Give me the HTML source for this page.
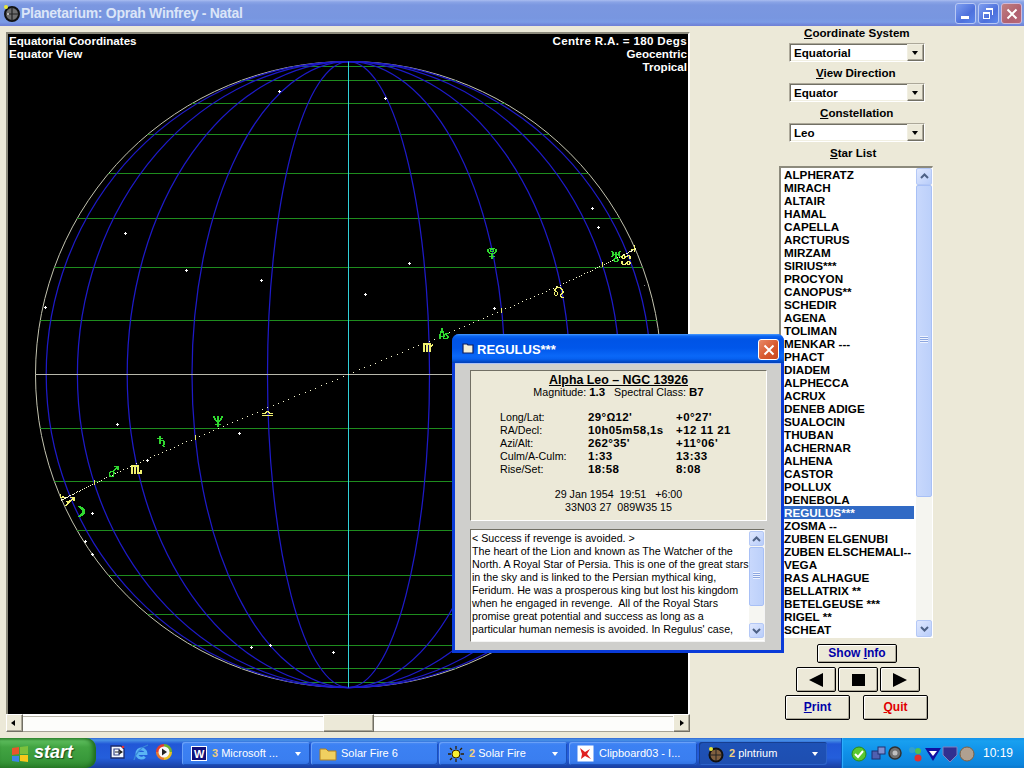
<!DOCTYPE html>
<html><head><meta charset="utf-8"><title>Planetarium</title>
<style>
*{margin:0;padding:0;box-sizing:border-box}
html,body{width:1024px;height:768px;overflow:hidden;background:#ece9d8;font-family:"Liberation Sans",sans-serif}
.a{position:absolute}
#title{left:0;top:0;width:1024px;height:26px;background:linear-gradient(to bottom,#a9bdf0 0px,#8aa4e6 2px,#7b97e0 5px,#7896e0 18px,#7a9be6 22px,#6f84d8 25px,#6f80d6 26px)}
#title .t{left:21px;top:4.5px;letter-spacing:-0.3px;font:bold 14px "Liberation Sans",sans-serif;color:#dbe5f8;white-space:nowrap}
.tb{top:3px;width:21px;height:21px;border:1px solid #b8c8f4;border-radius:3px;background:linear-gradient(135deg,#7e9ef0,#4d70dc 60%,#5b86ec)}
.tbx{background:linear-gradient(135deg,#c08080,#b06070 60%,#b86878);border-color:#d0b8d8}
.txt{white-space:nowrap}
#panel{left:6px;top:32px;width:684px;height:682px;border-top:2px solid #8c8a7c;border-left:2px solid #8c8a7c;border-right:2px solid #fff;background:#000}
.lbl{font:bold 11.6px "Liberation Sans",sans-serif;color:#000;white-space:nowrap}
.wt{font:bold 11.6px "Liberation Sans",sans-serif;color:#fff;white-space:nowrap;line-height:13px}
.combo{left:789px;width:136px;height:19px;background:#fff;border-top:1px solid #aca899;border-left:1px solid #aca899;border-right:1px solid #fff;border-bottom:1px solid #fff;box-shadow:inset 1px 1px 0 #716f64,inset -1px -1px 0 #f1efe2}
.combo .v{left:4px;top:2px;font:bold 11.6px "Liberation Sans",sans-serif}
.combo .dd{right:0px;top:0px;width:17px;height:17px;background:#ece9d8;border-top:1px solid #f1efe2;border-left:1px solid #f1efe2;border-right:1px solid #716f64;border-bottom:1px solid #716f64;box-shadow:inset -1px -1px 0 #aca899}
.dd:after{content:"";position:absolute;left:4px;top:6px;border-left:3.5px solid transparent;border-right:3.5px solid transparent;border-top:4px solid #000}
#list{left:779px;top:166px;width:154px;height:472px;background:#fff;border-top:2px solid #8c8a7c;border-left:2px solid #8c8a7c;border-right:1px solid #fff;border-bottom:1px solid #fff}
.li{height:13px;line-height:13px;font:bold 11.7px/13px "Liberation Sans",sans-serif;padding-left:3px;white-space:nowrap;width:133px;color:#000}
.sel{background:#316ac5;color:#fff}
.sb{background:#ece9d8;border-top:1px solid #fff;border-left:1px solid #fff;border-right:1px solid #716f64;border-bottom:1px solid #716f64;box-shadow:inset -1px -1px 0 #aca899}
.btn{background:#ece9d8;border:1px solid #000;border-radius:2px;box-shadow:inset 1px 1px 0 #fff,inset -1px -1px 0 #aca899;text-align:center;font:bold 12px "Liberation Sans",sans-serif}
#dlg{left:452px;top:334px;width:332px;height:319px;background:#0a3bd8;border-radius:7px 7px 0 0}
#dlgt{left:0;top:0;width:332px;height:29px;border-radius:7px 7px 0 0;background:linear-gradient(to bottom,#4a9cff 0px,#0c66f2 2px,#0054e6 5px,#0056ea 14px,#0a68f8 22px,#0660f0 25px,#0044c0 28px,#0040b8 29px)}
#dlgb{left:3px;top:29px;width:326px;height:287px;background:#cfcfcc;border-top:1px solid #a8c0f8}
.sunk{border-top:1px solid #716f64;border-left:1px solid #716f64;border-right:1px solid #fff;border-bottom:1px solid #fff}
.r11{font:10.7px "Liberation Sans",sans-serif;color:#000;white-space:nowrap}
.b11{font:bold 11.5px "Liberation Sans",sans-serif;color:#000;white-space:nowrap}
#task{left:0;top:738px;width:1024px;height:30px;background:linear-gradient(to bottom,#3168d5 0px,#4993e6 2px,#2157d7 6px,#245edb 20px,#1941a5 29px,#1a3ea0 30px)}
.tk{top:4px;height:23px;border-radius:3px;background:linear-gradient(to bottom,#4c8cf5 0,#3c81f3 3px,#3a7ef0 18px,#3070e0 23px);box-shadow:inset 1px 1px 0 #69a0f8, inset -1px -1px 0 #1c4fb8;color:#fff;font:11px "Liberation Sans",sans-serif;white-space:nowrap}
.tka{background:linear-gradient(to bottom,#1e52b7 0,#1e4eb0 23px);box-shadow:inset 1px 1px 0 #173f90, inset -1px -1px 0 #2d62c8}
.tk .tx{position:absolute;top:5px}
.tk .ar{position:absolute;right:9px;top:10px;border-left:3.5px solid transparent;border-right:3.5px solid transparent;border-top:4px solid #fff}
</style></head><body>
<div class="a" id="title">
  <svg class="a" style="left:3px;top:4px" width="18" height="18" viewBox="0 0 18 18"><circle cx="9" cy="10" r="7" fill="#6e6e6e" stroke="#111" stroke-width="2"/><path d="M9 3v14M2 10h14" stroke="#222" stroke-width="1.2"/><circle cx="5" cy="10" r="1" fill="#ddd"/><circle cx="3" cy="3" r="2" fill="#e8e838"/></svg>
  <div class="a t">Planetarium: Oprah Winfrey - Natal</div>
  <div class="a tb" style="left:955px"><div class="a" style="left:5px;top:12px;width:8px;height:3px;background:#fff"></div></div>
  <div class="a tb" style="left:978px"><div class="a" style="left:4px;top:8px;width:7px;height:7px;border:1px solid #fff;border-top-width:2px"></div><div class="a" style="left:7px;top:4px;width:7px;height:7px;border-top:2px solid #fff;border-right:1px solid #fff"></div></div>
  <div class="a tb tbx" style="left:1001px"><svg class="a" style="left:4px;top:4px" width="12" height="12"><path d="M1.5 1.5L10.5 10.5M10.5 1.5L1.5 10.5" stroke="#fff" stroke-width="2"/></svg></div>
</div>

<div class="a" id="panel"></div>
<svg width="1024" height="768" style="position:absolute;left:0;top:0">
<defs><clipPath id="cc"><rect x="8" y="34" width="680" height="680"/></clipPath></defs>
<g clip-path="url(#cc)">
<circle cx="348.5" cy="374.5" r="313" fill="none" stroke="#c4c4b0" stroke-width="1"/>
<line x1="292.8" y1="682.5" x2="404.2" y2="682.5" stroke="#1e8c1e" stroke-width="1"/>
<line x1="241.1" y1="668.5" x2="455.9" y2="668.5" stroke="#1e8c1e" stroke-width="1"/>
<line x1="191.9" y1="645.5" x2="505.1" y2="645.5" stroke="#1e8c1e" stroke-width="1"/>
<line x1="147.6" y1="614.5" x2="549.4" y2="614.5" stroke="#1e8c1e" stroke-width="1"/>
<line x1="108.6" y1="575.5" x2="588.4" y2="575.5" stroke="#1e8c1e" stroke-width="1"/>
<line x1="77.1" y1="530.5" x2="619.9" y2="530.5" stroke="#1e8c1e" stroke-width="1"/>
<line x1="54.4" y1="481.5" x2="642.6" y2="481.5" stroke="#1e8c1e" stroke-width="1"/>
<line x1="40.2" y1="428.5" x2="656.8" y2="428.5" stroke="#1e8c1e" stroke-width="1"/>
<line x1="40.2" y1="320.5" x2="656.8" y2="320.5" stroke="#1e8c1e" stroke-width="1"/>
<line x1="54.4" y1="267.5" x2="642.6" y2="267.5" stroke="#1e8c1e" stroke-width="1"/>
<line x1="77.1" y1="218.5" x2="619.9" y2="218.5" stroke="#1e8c1e" stroke-width="1"/>
<line x1="108.6" y1="173.5" x2="588.4" y2="173.5" stroke="#1e8c1e" stroke-width="1"/>
<line x1="147.6" y1="134.5" x2="549.4" y2="134.5" stroke="#1e8c1e" stroke-width="1"/>
<line x1="191.9" y1="103.5" x2="505.1" y2="103.5" stroke="#1e8c1e" stroke-width="1"/>
<line x1="241.1" y1="80.5" x2="455.9" y2="80.5" stroke="#1e8c1e" stroke-width="1"/>
<line x1="292.8" y1="66.5" x2="404.2" y2="66.5" stroke="#1e8c1e" stroke-width="1"/>
<ellipse cx="348.5" cy="374.5" rx="81.0" ry="313" fill="none" stroke="#1e1ac8" stroke-width="1.25"/>
<ellipse cx="348.5" cy="374.5" rx="156.5" ry="313" fill="none" stroke="#1e1ac8" stroke-width="1.25"/>
<ellipse cx="348.5" cy="374.5" rx="221.3" ry="313" fill="none" stroke="#1e1ac8" stroke-width="1.25"/>
<ellipse cx="348.5" cy="374.5" rx="271.1" ry="313" fill="none" stroke="#1e1ac8" stroke-width="1.25"/>
<ellipse cx="348.5" cy="374.5" rx="302.3" ry="313" fill="none" stroke="#1e1ac8" stroke-width="1.25"/>
<line x1="35.5" y1="374.5" x2="661.5" y2="374.5" stroke="#b8b8ac" stroke-width="1"/>
<line x1="348.5" y1="61.5" x2="348.5" y2="687.5" stroke="#30d0d8" stroke-width="1"/>
<path d="M61 500h1v1h-1zM61 500h1v1h-1zM61 500h1v1h-1zM61 499h1v1h-1zM62 499h1v1h-1zM62 499h1v1h-1zM63 499h1v1h-1zM63 499h1v1h-1zM64 498h1v1h-1zM65 498h1v1h-1zM65 497h1v1h-1zM66 497h1v1h-1zM67 497h1v1h-1zM68 496h1v1h-1zM69 495h1v1h-1zM70 495h1v1h-1zM72 494h1v1h-1zM73 494h1v1h-1zM74 493h1v1h-1zM76 492h1v1h-1zM77 491h1v1h-1zM79 491h1v1h-1zM80 490h1v1h-1zM82 489h1v1h-1zM84 488h1v1h-1zM86 487h1v1h-1zM88 486h1v1h-1zM90 485h1v1h-1zM92 484h1v1h-1zM94 483h1v1h-1zM97 482h1v1h-1zM99 481h1v1h-1zM101 480h1v1h-1zM104 478h1v1h-1zM106 477h1v1h-1zM109 476h1v1h-1zM112 475h1v1h-1zM115 473h1v1h-1zM117 472h1v1h-1zM120 471h1v1h-1zM123 469h1v1h-1zM127 468h1v1h-1zM130 466h1v1h-1zM133 465h1v1h-1zM136 463h1v1h-1zM140 462h1v1h-1zM143 460h1v1h-1zM147 459h1v1h-1zM150 457h1v1h-1zM154 455h1v1h-1zM158 454h1v1h-1zM162 452h1v1h-1zM166 450h1v1h-1zM170 449h1v1h-1zM174 447h1v1h-1zM178 445h1v1h-1zM182 443h1v1h-1zM186 441h1v1h-1zM191 440h1v1h-1zM195 438h1v1h-1zM199 436h1v1h-1zM204 434h1v1h-1zM209 432h1v1h-1zM213 430h1v1h-1zM218 428h1v1h-1zM223 426h1v1h-1zM227 424h1v1h-1zM232 422h1v1h-1zM237 420h1v1h-1zM242 418h1v1h-1zM247 416h1v1h-1zM252 414h1v1h-1zM257 412h1v1h-1zM262 409h1v1h-1zM267 407h1v1h-1zM273 405h1v1h-1zM278 403h1v1h-1zM283 401h1v1h-1zM288 399h1v1h-1zM294 396h1v1h-1zM299 394h1v1h-1zM305 392h1v1h-1zM310 390h1v1h-1zM315 388h1v1h-1zM321 385h1v1h-1zM326 383h1v1h-1zM332 381h1v1h-1zM337 379h1v1h-1zM343 376h1v1h-1zM348 374h1v1h-1zM353 372h1v1h-1zM359 369h1v1h-1zM364 367h1v1h-1zM370 365h1v1h-1zM375 363h1v1h-1zM381 360h1v1h-1zM386 358h1v1h-1zM391 356h1v1h-1zM397 354h1v1h-1zM402 352h1v1h-1zM408 349h1v1h-1zM413 347h1v1h-1zM418 345h1v1h-1zM423 343h1v1h-1zM429 341h1v1h-1zM434 339h1v1h-1zM439 336h1v1h-1zM444 334h1v1h-1zM449 332h1v1h-1zM454 330h1v1h-1zM459 328h1v1h-1zM464 326h1v1h-1zM469 324h1v1h-1zM473 322h1v1h-1zM478 320h1v1h-1zM483 318h1v1h-1zM487 316h1v1h-1zM492 314h1v1h-1zM497 312h1v1h-1zM501 310h1v1h-1zM505 308h1v1h-1zM510 307h1v1h-1zM514 305h1v1h-1zM518 303h1v1h-1zM522 301h1v1h-1zM526 299h1v1h-1zM530 298h1v1h-1zM534 296h1v1h-1zM538 294h1v1h-1zM542 293h1v1h-1zM546 291h1v1h-1zM549 289h1v1h-1zM553 288h1v1h-1zM556 286h1v1h-1zM560 285h1v1h-1zM563 283h1v1h-1zM566 282h1v1h-1zM569 280h1v1h-1zM573 279h1v1h-1zM576 277h1v1h-1zM579 276h1v1h-1zM581 275h1v1h-1zM584 273h1v1h-1zM587 272h1v1h-1zM590 271h1v1h-1zM592 270h1v1h-1zM595 268h1v1h-1zM597 267h1v1h-1zM599 266h1v1h-1zM602 265h1v1h-1zM604 264h1v1h-1zM606 263h1v1h-1zM608 262h1v1h-1zM610 261h1v1h-1zM612 260h1v1h-1zM614 259h1v1h-1zM616 258h1v1h-1zM617 257h1v1h-1zM619 257h1v1h-1zM620 256h1v1h-1zM622 255h1v1h-1zM623 254h1v1h-1zM624 254h1v1h-1zM626 253h1v1h-1zM627 253h1v1h-1zM628 252h1v1h-1zM629 251h1v1h-1zM630 251h1v1h-1zM631 251h1v1h-1zM631 250h1v1h-1zM632 250h1v1h-1zM633 249h1v1h-1zM633 249h1v1h-1zM634 249h1v1h-1zM634 249h1v1h-1zM635 249h1v1h-1zM635 248h1v1h-1zM635 248h1v1h-1zM635 248h1v1h-1z" fill="#f8f8d0"/>
<rect x="94" y="480" width="1" height="5" fill="#e8e860"/>
<rect x="195" y="435" width="1" height="5" fill="#e8e860"/>
<rect x="501" y="308" width="1" height="5" fill="#e8e860"/>
<rect x="602" y="262" width="1" height="5" fill="#e8e860"/>
<path d="M60 494h1v4h-1zM61 497h4v1h-4zM62 496h2v1h-2z" fill="#f0f070"/>
<path d="M634 245h1v7h-1zM631 249h3v1h-3z" fill="#f0f070"/>
<path d="M278 91h3v1h-3zM279 90h1v3h-1z" fill="#fff"/>
<path d="M384 98h3v1h-3zM385 97h1v3h-1z" fill="#fff"/>
<path d="M124 233h3v1h-3zM125 232h1v3h-1z" fill="#fff"/>
<path d="M185 270h3v1h-3zM186 269h1v3h-1z" fill="#fff"/>
<path d="M260 280h3v1h-3zM261 279h1v3h-1z" fill="#fff"/>
<path d="M408 263h3v1h-3zM409 262h1v3h-1z" fill="#fff"/>
<path d="M591 208h3v1h-3zM592 207h1v3h-1z" fill="#fff"/>
<path d="M597 227h3v1h-3zM598 226h1v3h-1z" fill="#fff"/>
<path d="M364 294h3v1h-3zM365 293h1v3h-1z" fill="#fff"/>
<path d="M493 308h3v1h-3zM494 307h1v3h-1z" fill="#fff"/>
<path d="M44 307h3v1h-3zM45 306h1v3h-1z" fill="#fff"/>
<path d="M116 424h3v1h-3zM117 423h1v3h-1z" fill="#fff"/>
<path d="M238 433h3v1h-3zM239 432h1v3h-1z" fill="#fff"/>
<path d="M146 460h3v1h-3zM147 459h1v3h-1z" fill="#fff"/>
<path d="M91 513h3v1h-3zM92 512h1v3h-1z" fill="#fff"/>
<path d="M84 541h3v1h-3zM85 540h1v3h-1z" fill="#fff"/>
<path d="M91 554h3v1h-3zM92 553h1v3h-1z" fill="#fff"/>
<path d="M250 647h3v1h-3zM251 646h1v3h-1z" fill="#fff"/>
<path d="M269 645h3v1h-3zM270 644h1v3h-1z" fill="#fff"/>
<path d="M332 652h3v1h-3zM333 651h1v3h-1z" fill="#fff"/>
<rect x="644" y="285" width="1" height="1" fill="#888"/>
<path d="M213 416h2v1h-2zM217 416h2v1h-2zM221 416h2v1h-2zM213 417h2v1h-2zM217 417h2v1h-2zM221 417h2v1h-2zM214 418h2v1h-2zM217 418h2v1h-2zM220 418h2v1h-2zM214 419h2v1h-2zM217 419h2v1h-2zM220 419h2v1h-2zM215 420h6v1h-6zM216 421h4v1h-4zM217 422h2v1h-2zM217 423h2v1h-2zM215 424h6v1h-6zM217 425h2v1h-2zM217 426h2v1h-2z" fill="#30d830"/><path d="M266 411h3v1h-3zM265 412h2v1h-2zM268 412h2v1h-2zM262 413h4v1h-4zM269 413h4v1h-4zM262 415h11v1h-11z" fill="#f0f070"/><path d="M159 436h2v1h-2zM159 437h2v1h-2zM157 438h6v1h-6zM159 439h2v1h-2zM159 440h5v1h-5zM159 441h2v1h-2zM163 441h2v1h-2zM159 442h2v1h-2zM163 442h2v1h-2zM159 443h2v1h-2zM163 443h2v1h-2zM163 444h2v1h-2zM162 445h2v1h-2zM163 446h2v1h-2z" fill="#30d830"/><path d="M114 466h5v1h-5zM116 467h3v1h-3zM115 468h4v1h-4zM114 469h2v1h-2zM117 469h2v1h-2zM113 470h2v1h-2zM110 471h4v1h-4zM109 472h2v1h-2zM113 472h2v1h-2zM109 473h1v1h-1zM113 473h2v1h-2zM109 474h1v1h-1zM113 474h1v1h-1zM109 475h2v1h-2zM113 475h1v1h-1zM109 476h5v1h-5z" fill="#30d830"/><path d="M131 465h8v1h-8zM131 466h8v1h-8zM131 467h2v1h-2zM134 467h2v1h-2zM137 467h2v1h-2zM131 468h2v1h-2zM134 468h2v1h-2zM137 468h2v1h-2zM131 469h2v1h-2zM134 469h2v1h-2zM137 469h2v1h-2zM131 470h2v1h-2zM134 470h2v1h-2zM137 470h2v1h-2zM140 470h2v1h-2zM131 471h2v1h-2zM134 471h2v1h-2zM137 471h2v1h-2zM140 471h2v1h-2zM131 472h2v1h-2zM134 472h2v1h-2zM137 472h5v1h-5zM131 473h2v1h-2zM134 473h2v1h-2zM137 473h5v1h-5z" fill="#f0f070"/><path d="M70 497h5v1h-5zM72 498h3v1h-3zM71 499h4v1h-4zM69 500h3v1h-3zM73 500h2v1h-2zM66 501h5v1h-5zM67 502h3v1h-3zM67 503h2v1h-2zM66 504h2v1h-2zM65 505h2v1h-2z" fill="#f0f070"/><path d="M78 506h3v1h-3zM79 507h4v1h-4zM80 508h4v1h-4zM81 509h4v1h-4zM82 510h3v1h-3zM82 511h3v1h-3zM82 512h3v1h-3zM81 513h4v1h-4zM80 514h4v1h-4zM79 515h4v1h-4zM78 516h3v1h-3z" fill="#30d830"/><path d="M423 343h8v1h-8zM423 344h8v1h-8zM432 344h1v1h-1zM423 345h2v1h-2zM426 345h2v1h-2zM429 345h4v1h-4zM423 346h2v1h-2zM426 346h2v1h-2zM429 346h3v1h-3zM423 347h2v1h-2zM426 347h2v1h-2zM429 347h2v1h-2zM423 348h2v1h-2zM426 348h2v1h-2zM429 348h2v1h-2zM423 349h2v1h-2zM426 349h2v1h-2zM429 349h2v1h-2zM423 350h2v1h-2zM426 350h2v1h-2zM429 350h2v1h-2zM423 351h2v1h-2zM426 351h2v1h-2zM429 351h2v1h-2z" fill="#f0f070"/><path d="M441 328h2v1h-2zM441 329h2v1h-2zM441 330h2v1h-2zM440 331h4v1h-4zM440 332h4v1h-4zM440 333h1v1h-1zM443 333h1v1h-1zM445 333h4v1h-4zM439 334h2v1h-2zM443 334h4v1h-4zM439 335h2v1h-2zM443 335h2v1h-2zM446 335h2v1h-2zM439 336h6v1h-6zM447 336h2v1h-2zM439 337h2v1h-2zM443 337h1v1h-1zM447 337h2v1h-2zM439 338h2v1h-2zM443 338h5v1h-5z" fill="#30d830"/><path d="M557 286h1v1h-1zM556 287h5v1h-5zM555 288h2v1h-2zM560 288h2v1h-2zM554 289h2v1h-2zM561 289h2v1h-2zM554 290h2v1h-2zM562 290h1v1h-1zM555 291h2v1h-2zM562 291h2v1h-2zM554 292h1v1h-1zM557 292h1v1h-1zM562 292h2v1h-2zM554 293h1v1h-1zM557 293h1v1h-1zM561 293h2v1h-2zM554 294h1v1h-1zM557 294h1v1h-1zM560 294h2v1h-2zM555 295h2v1h-2zM560 295h1v1h-1zM560 296h2v1h-2zM561 297h3v1h-3z" fill="#f0f070"/><path d="M489 248h6v1h-6zM487 249h2v1h-2zM490 249h4v1h-4zM495 249h2v1h-2zM487 250h2v1h-2zM490 250h1v1h-1zM493 250h1v1h-1zM495 250h2v1h-2zM487 251h2v1h-2zM490 251h4v1h-4zM495 251h2v1h-2zM488 252h2v1h-2zM494 252h2v1h-2zM489 253h6v1h-6zM491 254h2v1h-2zM491 255h2v1h-2zM489 256h6v1h-6zM491 257h2v1h-2zM491 258h2v1h-2z" fill="#30d830"/><path d="M611 251h2v1h-2zM619 251h2v1h-2zM612 252h2v1h-2zM615 252h2v1h-2zM618 252h2v1h-2zM612 253h2v1h-2zM615 253h2v1h-2zM618 253h2v1h-2zM612 254h8v1h-8zM612 255h2v1h-2zM615 255h2v1h-2zM618 255h2v1h-2zM611 256h2v1h-2zM615 256h2v1h-2zM619 256h2v1h-2zM615 257h2v1h-2zM614 258h4v1h-4zM613 259h2v1h-2zM617 259h2v1h-2zM613 260h2v1h-2zM617 260h2v1h-2zM614 261h4v1h-4z" fill="#30d830"/><path d="M622 255h3v1h-3zM627 255h3v1h-3zM621 256h2v1h-2zM624 256h4v1h-4zM629 256h2v1h-2zM621 257h2v1h-2zM624 257h2v1h-2zM629 257h2v1h-2zM622 258h3v1h-3zM629 258h2v1h-2zM621 261h2v1h-2zM627 261h3v1h-3zM621 262h2v1h-2zM626 262h2v1h-2zM629 262h2v1h-2zM621 263h2v1h-2zM625 263h3v1h-3zM629 263h2v1h-2zM622 264h4v1h-4zM627 264h3v1h-3z" fill="#f0f070"/></g>
</svg>
<div class="a wt" style="left:9px;top:34px">Equatorial Coordinates<br>Equator View</div>
<div class="a wt" style="right:337px;top:34px;text-align:right"><span style="letter-spacing:0.33px">Centre R.A. = 180 Degs</span><br>Geocentric<br>Tropical</div>

<!-- horizontal scrollbar -->
<div class="a" style="left:6px;top:714px;width:684px;height:18px;background:#fdfdfb;border-top:2px solid #fff;border-bottom:1px solid #a5a296"><div class="a" style="left:0;top:0;width:684px;height:1px;background:#b8b6a8"></div></div>
<div class="a sb" style="left:6px;top:714px;width:17px;height:18px"><div class="a" style="left:4px;top:5px;border-top:3.5px solid transparent;border-bottom:3.5px solid transparent;border-right:4px solid #000"></div></div>
<div class="a sb" style="left:323px;top:714px;width:51px;height:18px"></div>
<div class="a sb" style="left:673px;top:714px;width:17px;height:18px"><div class="a" style="left:6px;top:5px;border-top:3.5px solid transparent;border-bottom:3.5px solid transparent;border-left:4px solid #000"></div></div>

<!-- right panel -->
<div class="a lbl" style="left:804px;top:26px"><u>C</u>oordinate System</div>
<div class="a combo" style="top:43px"><div class="a v">Equatorial</div><div class="a dd"></div></div>
<div class="a lbl" style="left:816px;top:66px"><u>V</u>iew Direction</div>
<div class="a combo" style="top:83px"><div class="a v">Equator</div><div class="a dd"></div></div>
<div class="a lbl" style="left:820px;top:106px"><u>C</u>onstellation</div>
<div class="a combo" style="top:123px"><div class="a v">Leo</div><div class="a dd"></div></div>
<div class="a lbl" style="left:830px;top:146px"><u>S</u>tar List</div>
<div class="a" id="list"><div class="li">ALPHERATZ</div><div class="li">MIRACH</div><div class="li">ALTAIR</div><div class="li">HAMAL</div><div class="li">CAPELLA</div><div class="li">ARCTURUS</div><div class="li">MIRZAM</div><div class="li">SIRIUS***</div><div class="li">PROCYON</div><div class="li">CANOPUS**</div><div class="li">SCHEDIR</div><div class="li">AGENA</div><div class="li">TOLIMAN</div><div class="li">MENKAR ---</div><div class="li">PHACT</div><div class="li">DIADEM</div><div class="li">ALPHECCA</div><div class="li">ACRUX</div><div class="li">DENEB ADIGE</div><div class="li">SUALOCIN</div><div class="li">THUBAN</div><div class="li">ACHERNAR</div><div class="li">ALHENA</div><div class="li">CASTOR</div><div class="li">POLLUX</div><div class="li">DENEBOLA</div><div class="li sel">REGULUS***</div><div class="li">ZOSMA --</div><div class="li">ZUBEN ELGENUBI</div><div class="li">ZUBEN ELSCHEMALI--</div><div class="li">VEGA</div><div class="li">RAS ALHAGUE</div><div class="li">BELLATRIX **</div><div class="li">BETELGEUSE ***</div><div class="li">RIGEL **</div><div class="li">SCHEAT</div>
  <div class="a" style="left:135px;top:0;width:16px;height:469px;background:#f5f5f0"></div>
  <div class="a" style="left:135px;top:0px;width:16px;height:17px;border:1px solid #b4c8f6;border-radius:2px;background:linear-gradient(135deg,#e0e8fe,#b8cdfa)"><svg class="a" style="left:3px;top:4px" width="9" height="6"><path d="M1 5L4.5 1.5L8 5" stroke="#4d6185" stroke-width="2" fill="none"/></svg></div>
  <div class="a" style="left:135px;top:17px;width:16px;height:312px;border:1px solid #a8c0f6;border-radius:2px;background:linear-gradient(to right,#c8d8fc,#bcd0fa)"><div class="a" style="left:3px;top:150px;width:8px;height:7px;background:repeating-linear-gradient(to bottom,#eef3ff 0,#eef3ff 1px,#8ca6e0 1px,#8ca6e0 2px)"></div></div>
  <div class="a" style="left:135px;top:452px;width:16px;height:17px;border:1px solid #b4c8f6;border-radius:2px;background:linear-gradient(135deg,#e0e8fe,#b8cdfa)"><svg class="a" style="left:3px;top:5px" width="9" height="6"><path d="M1 1L4.5 4.5L8 1" stroke="#4d6185" stroke-width="2" fill="none"/></svg></div>
</div>
<div class="a btn" style="left:817px;top:644px;width:80px;height:19px;color:#0000a8;line-height:17px">Show <u>I</u>nfo</div>
<div class="a btn" style="left:796px;top:667px;width:40px;height:25px"><div class="a" style="left:12px;top:5px;border-top:7px solid transparent;border-bottom:7px solid transparent;border-right:14px solid #000"></div></div>
<div class="a btn" style="left:838px;top:667px;width:40px;height:25px"><div class="a" style="left:13px;top:6px;width:13px;height:12px;background:#000"></div></div>
<div class="a btn" style="left:880px;top:667px;width:40px;height:25px"><div class="a" style="left:12px;top:5px;border-top:7px solid transparent;border-bottom:7px solid transparent;border-left:14px solid #000"></div></div>
<div class="a btn" style="left:785px;top:695px;width:65px;height:25px;color:#0000a8;line-height:23px"><u>P</u>rint</div>
<div class="a btn" style="left:863px;top:695px;width:65px;height:25px;color:#e00000;line-height:23px"><u>Q</u>uit</div>

<!-- dialog -->
<div class="a" id="dlg">
  <div class="a" id="dlgt">
    <svg class="a" style="left:10px;top:9px" width="12" height="11"><path d="M1 1h4l1 1h5v8h-10z" fill="#f4f0d8" stroke="#102060" stroke-width="1.2"/></svg>
    <div class="a txt" style="left:25px;top:8px;font:bold 13px 'Liberation Sans',sans-serif;color:#fff">REGULUS***</div>
    <div class="a" style="left:306px;top:5px;width:21px;height:21px;border:1px solid #fff;border-radius:3px;background:linear-gradient(135deg,#e88a68,#d85a30 55%,#c84820)"><svg class="a" style="left:4px;top:4px" width="12" height="12"><path d="M1.5 1.5L10.5 10.5M10.5 1.5L1.5 10.5" stroke="#fff" stroke-width="2"/></svg></div>
  </div>
  <div class="a" id="dlgb">
    <div class="a sunk" style="left:15px;top:6px;width:297px;height:151px;background:#ece9d8">
      <div class="a b11" style="left:0;width:295px;top:2px;text-align:center;font-size:12.4px;text-decoration:underline">Alpha Leo &#8211; NGC 13926</div>
      <div class="a r11" style="left:0;width:295px;top:15px;text-align:center">Magnitude: <b style="font-size:11.5px">1.3</b>&nbsp;&nbsp; Spectral Class: <b style="font-size:11.5px">B7</b></div>
      <div class="a r11" style="left:29px;top:40px;line-height:13px">Long/Lat:<br>RA/Decl:<br>Azi/Alt:<br>Culm/A-Culm:<br>Rise/Set:</div>
      <div class="a b11" style="left:117px;top:40px;line-height:13px;letter-spacing:0.35px">29&deg;&#8486;12'<br>10h05m58,1s<br>262&deg;35'<br>1:33<br>18:58</div>
      <div class="a b11" style="left:205px;top:40px;line-height:13px;letter-spacing:0.45px">+0&deg;27'<br>+12 11 21<br>+11&deg;06'<br>13:33<br>8:08</div>
      <div class="a r11" style="left:0;width:295px;top:117px;text-align:center;line-height:13px">29 Jan 1954&nbsp; 19:51&nbsp;&nbsp; +6:00<br>33N03 27&nbsp; 089W35 15</div>
    </div>
    <div class="a" style="left:15px;top:165px;width:295px;height:113px;overflow:hidden;background:#fff;border-top:1px solid #716f64;border-left:1px solid #716f64;border-right:1px solid #f4f4f4;border-bottom:1px solid #f4f4f4">
      <div class="a r11" style="left:1px;top:2px;line-height:13px">&lt; Success if revenge is avoided. &gt;<br>The heart of the Lion and known as The Watcher of the<br>North. A Royal Star of Persia. This is one of the great stars<br>in the sky and is linked to the Persian mythical king,<br>Feridum. He was a prosperous king but lost his kingdom<br>when he engaged in revenge.&nbsp; All of the Royal Stars<br>promise great potential and success as long as a<br>particular human nemesis is avoided. In Regulus' case,</div>
      <div class="a" style="left:278px;top:1px;width:15px;height:109px;background:#f6f6f2"></div>
      <div class="a" style="left:278px;top:1px;width:15px;height:15px;border:1px solid #b4c8f6;border-radius:2px;background:linear-gradient(135deg,#e0e8fe,#b8cdfa)"><svg class="a" style="left:2px;top:4px" width="9" height="6"><path d="M1 5L4.5 1.5L8 5" stroke="#4d6185" stroke-width="2" fill="none"/></svg></div>
      <div class="a" style="left:278px;top:17px;width:15px;height:59px;border:1px solid #a8c0f6;border-radius:2px;background:linear-gradient(to right,#c8d8fc,#bcd0fa)"><div class="a" style="left:3px;top:24px;width:7px;height:7px;background:repeating-linear-gradient(to bottom,#eef3ff 0,#eef3ff 1px,#8ca6e0 1px,#8ca6e0 2px)"></div></div>
      <div class="a" style="left:278px;top:93px;width:15px;height:15px;border:1px solid #b4c8f6;border-radius:2px;background:linear-gradient(135deg,#e0e8fe,#b8cdfa)"><svg class="a" style="left:2px;top:4px" width="9" height="6"><path d="M1 1L4.5 4.5L8 1" stroke="#4d6185" stroke-width="2" fill="none"/></svg></div>
    </div>
  </div>
</div>

<!-- taskbar -->
<div class="a" id="task">
  <div class="a" style="left:0;top:0;width:96px;height:30px;border-radius:0 10px 10px 0;background:linear-gradient(to bottom,#3f9a3f 0,#5cbc5c 3px,#42a442 9px,#38983a 22px,#2c842c 30px);box-shadow:inset -3px 0 4px #1e6a1e"></div>
  <svg class="a" style="left:10px;top:7px" width="20" height="18"><path d="M2 3l7-1v7l-7 1z" fill="#e8552c"/><path d="M10 2l8-1v8l-8 0z" fill="#7cc03c"/><path d="M2 11l7 0v6l-7-1z" fill="#3c84e8"/><path d="M10 10l8 0v7l-8-1z" fill="#f8c81c"/></svg>
  <div class="a txt" style="left:34px;top:4px;font:bold italic 18px 'Liberation Sans',sans-serif;color:#fff;text-shadow:1px 1px 1px #1a4a1a">start</div>
  <svg class="a" style="left:109px;top:5px" width="17" height="17"><path d="M2 3h10l3 3v9h-13z" fill="#f4f8ff" stroke="#1a2a6a" stroke-width="1.3"/><path d="M5 6h5v6h-5z" fill="none" stroke="#3a4a8a" stroke-width="1.2"/><path d="M6 9h7M10 7l3 2-3 2" stroke="#222" stroke-width="1.1" fill="none"/><circle cx="14" cy="4" r="1.3" fill="#e03030"/></svg>
  <svg class="a" style="left:132px;top:5px" width="18" height="19"><path d="M5 10.5h9a4.6 4.6 0 1 0 -1.2 3.2" fill="none" stroke="#5ab4f4" stroke-width="2.8"/><path d="M2 17c1-6 7-13 14-15" fill="none" stroke="#3a8ad8" stroke-width="1.3"/></svg>
  <svg class="a" style="left:155px;top:5px" width="18" height="18"><circle cx="9" cy="9" r="6.8" fill="#f8f8f8"/><path d="M9 2.2a6.8 6.8 0 0 1 6.8 6.8" stroke="#70b030" stroke-width="2.6" fill="none"/><path d="M15.8 9a6.8 6.8 0 0 1 -6.8 6.8" stroke="#e8c020" stroke-width="2.6" fill="none"/><path d="M9 15.8a6.8 6.8 0 0 1 -6.8 -6.8" stroke="#e87830" stroke-width="2.6" fill="none"/><path d="M2.2 9a6.8 6.8 0 0 1 6.8 -6.8" stroke="#e04030" stroke-width="2.6" fill="none"/><path d="M7 5.5l5 3.5-5 3.5z" fill="#222"/></svg>
  <div class="a tk" style="left:182px;width:128px"><div class="a" style="left:9px;top:4px;width:16px;height:15px;background:#10107a;border:1px solid #fff"><div class="a" style="left:2px;top:1px;font:bold 11px 'Liberation Sans';color:#fff">W</div></div><span class="tx" style="left:30px"><b style="color:#f0d080;font-weight:bold">3</b> Microsoft ...</span><div class="ar"></div></div>
  <div class="a tk" style="left:311px;width:127px"><svg class="a" style="left:8px;top:4px" width="18" height="15"><path d="M1 3h6l2 2h8v9h-16z" fill="#f0d060" stroke="#b08020"/></svg><span class="tx" style="left:30px">Solar Fire 6</span></div>
  <div class="a tk" style="left:439px;width:128px"><svg class="a" style="left:8px;top:3px" width="18" height="18"><circle cx="9" cy="9" r="4" fill="#f8f030" stroke="#302000"/><path d="M9 1v3M9 14v3M1 9h3M14 9h3M3 3l2 2M13 13l2 2M3 15l2-2M13 5l2-2" stroke="#302000" stroke-width="1.3"/></svg><span class="tx" style="left:30px"><b style="color:#f0d080">2</b> Solar Fire</span><div class="ar"></div></div>
  <div class="a tk" style="left:569px;width:128px"><svg class="a" style="left:8px;top:3px" width="17" height="17"><rect x="0.5" y="0.5" width="16" height="16" fill="#fff"/><path d="M3 3l5 4 5-3-3 5 4 5-6-3-4 3 1-5z" fill="#e02020"/></svg><span class="tx" style="left:30px">Clipboard03 - I...</span></div>
  <div class="a tk tka" style="left:699px;width:128px"><svg class="a" style="left:8px;top:3px" width="18" height="18"><circle cx="9" cy="10" r="6.5" fill="#806040" stroke="#111" stroke-width="2"/><path d="M9 4v12M3 10h12" stroke="#222"/><circle cx="4" cy="4" r="2" fill="#e8e838"/></svg><span class="tx" style="left:30px"><b style="color:#f0d080">2</b> plntrium</span><div class="ar"></div></div>
  <div class="a" style="left:841px;top:0;width:183px;height:30px;background:linear-gradient(to bottom,#1290e8 0,#18a0f0 3px,#0f90e8 15px,#0c84dc 27px,#0a74c8 30px);border-left:1px solid #0b5ac0;box-shadow:inset 1px 0 1px #30b0ff"></div>
  <svg class="a" style="left:850px;top:7px" width="130" height="18">
    <circle cx="9" cy="9" r="7" fill="#5ac830" stroke="#2a8a18"/><path d="M5 9l3 3 5-6" stroke="#fff" stroke-width="2" fill="none"/>
    <rect x="22" y="6" width="8" height="8" fill="#5060b0" stroke="#203070"/><rect x="28" y="2" width="7" height="7" fill="#8090d0" stroke="#203070"/>
    <circle cx="45" cy="8" r="6" fill="#707070" stroke="#303030" stroke-width="1.5"/><circle cx="45" cy="8" r="2.5" fill="#c0c0c0"/>
    <circle cx="62" cy="5" r="3" fill="#30a0d0"/><circle cx="68" cy="6" r="3" fill="#50c050"/><circle cx="68" cy="13" r="3.5" fill="#e03030"/>
    <path d="M75 3h16l-8 13z" fill="#1010a0"/><path d="M79 6h8l-4 5z" fill="#fff"/>
    <path d="M93 2h14v8l-7 7-7-7z" fill="#303090" stroke="#8080c0"/>
    <circle cx="117" cy="9" r="7" fill="#b0a090" stroke="#806040"/>
  </svg>
  <div class="a txt" style="left:983px;top:8px;font:12px 'Liberation Sans',sans-serif;color:#fff">10:19</div>
</div>
</body></html>
